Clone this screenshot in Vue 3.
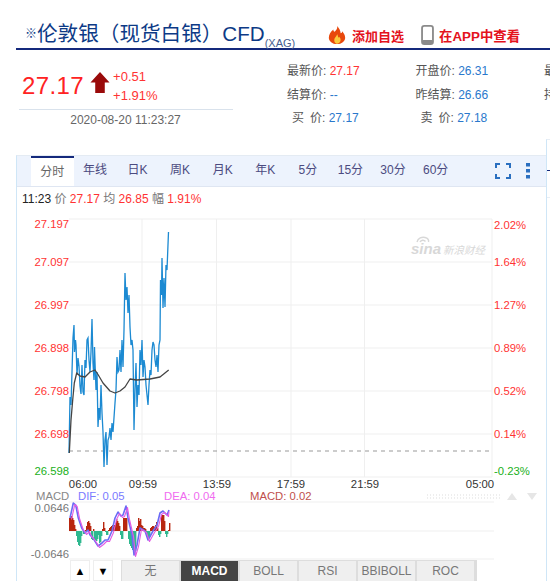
<script setup>
const stats = [
  [
    { label: '最新价:', value: '27.17', up: true },
    { label: '结算价:', value: '--' },
    { label: '买', tail: '价:', value: '27.17', gap: true },
  ],
  [
    { label: '开盘价:', value: '26.31' },
    { label: '昨结算:', value: '26.66' },
    { label: '卖', tail: '价:', value: '27.18', gap: true },
  ],
  [
    { label: '最高价:', value: '27.20' },
    { label: '持仓量:', value: '--' },
    { label: '', value: '' },
  ],
]

const tabs = ['分时', '年线', '日K', '周K', '月K', '年K', '5分', '15分', '30分', '60分']
const indicators = ['无', 'MACD', 'BOLL', 'RSI', 'BBIBOLL', 'ROC']

const leftLabels = [
  { y: 228, text: '27.197', color: '#f33' },
  { y: 266, text: '27.097', color: '#f33' },
  { y: 309, text: '26.997', color: '#f33' },
  { y: 352, text: '26.898', color: '#f33' },
  { y: 395, text: '26.798', color: '#f33' },
  { y: 438, text: '26.698', color: '#f33' },
  { y: 475, text: '26.598', color: '#1ab01a' },
]
const rightLabels = [
  { y: 229, text: '2.02%', color: '#f33' },
  { y: 266, text: '1.64%', color: '#f33' },
  { y: 309, text: '1.27%', color: '#f33' },
  { y: 352, text: '0.89%', color: '#f33' },
  { y: 395, text: '0.52%', color: '#f33' },
  { y: 438, text: '0.14%', color: '#f33' },
  { y: 475, text: '-0.23%', color: '#1ab01a' },
]
const hLines = [219, 262, 305, 348, 391, 434, 477]
const vLines = [142, 216.5, 291, 364.5, 492]
const times = [
  { x: 83, text: '06:00' },
  { x: 143, text: '09:59' },
  { x: 217, text: '13:59' },
  { x: 291, text: '17:59' },
  { x: 365, text: '21:59' },
  { x: 480, text: '05:00' },
]

const price = [
  69, 453, 70, 397, 71, 405, 72, 372, 73, 338, 74, 325, 74.5, 352, 75.5, 340, 76, 345, 77, 375,
  78, 358, 79, 366, 80, 386, 81, 394, 82, 365, 83, 392, 84, 395, 85, 360, 86, 368, 87, 340,
  88, 338, 89, 360, 90, 372, 91, 352, 92, 319, 93, 363, 94, 380, 94.5, 347, 95, 362, 96, 390,
  97, 372, 98, 427, 99, 408, 100, 420, 101, 385, 102, 413, 103, 432, 104, 467, 105, 440, 106, 432,
  107, 465, 108, 440, 109, 437, 110, 428, 111, 440, 112, 423, 113, 432, 115, 403, 116, 390, 117, 357,
  118, 372, 119, 370, 120, 350, 121, 372, 122, 340, 123, 367, 124, 330, 125, 273, 126, 300, 127, 287,
  128, 313, 129, 295, 130, 327, 131, 345, 132, 340, 133, 350, 134, 430, 135, 390, 136, 363, 137, 407,
  138, 385, 139, 395, 140, 350, 141, 365, 142, 340, 143, 377, 144, 360, 145, 367, 146, 385, 148, 405,
  149, 385, 150, 370, 151, 375, 152, 350, 153, 342, 154, 345, 155, 360, 156, 367, 157, 355, 158, 372,
  159, 345, 160, 340, 160.5, 280, 161.5, 295, 162, 258, 163, 308, 164, 278, 165, 307, 166, 265, 167, 270,
  168.5, 232,
]
const pricePoints = price.join(' ')

const avgPoints = '69.3,453 71,420 72.7,400 74.3,383 76.7,373 80,376 85,377 90,372 95,370 98.3,375 103,383 110,391 115,393 120,391 125,387 130,379 136.7,380 150,379 160,377 168.7,370'

// macd histogram, one value per x from 69 on
const macd = [
  13, 15, 15, 13, 11, 6, 2, -5, -11, -14, -15, -12, -5, 0, -3, -3, 1, 5, 9, 10,
  8, 5, -8, -9, 2, -8, -9, -10, -8, -4, -12, -11, -5, 2, 9, 3, -1, -4, -4, 1,
  3, 4, 5, 6, 4, 6, 8, 12, 10, 8, 5, -4, -8, -8, 13, 13, 13, 13, 0, -8, -13, -15,
  -17, -19, -21, -23, -20, 3, 5, 13, 10, 12, 6, 5, 3, 3, 2, -3, -7, -7, -6, 3,
  4, 5, 5, 4, 6, 9, 3, -4, -6, -3, 16, 16, 16, 10, -3, -6, -3, 1, 8,
]
const macdBars = macd.map((v, i) => ({
  x: 69 + i,
  y: v > 0 ? 531 - v : 531,
  h: Math.abs(v),
  color: v > 0 ? '#b8260f' : '#2fb88f',
}))

const dif = [
  [70, 518], [73.3, 503], [75.7, 505], [78.3, 518], [81.7, 528], [85, 533], [88, 530], [90, 535],
  [93, 538], [98, 546], [102, 543], [105, 540], [108, 540], [112, 531], [115, 518], [118, 512],
  [121, 516], [123, 515], [126, 506], [128, 518], [132, 535], [134, 555], [137, 545], [140, 528],
  [145, 531], [148, 540], [153, 531], [157, 525], [160, 513], [163, 511], [167, 515], [169, 510],
]
const difPoints = dif.map(([x, y]) => `${x},${y}`).join(' ')
const deaPoints = dif.map(([x, y]) => `${Math.min(x + 1.5, 169)},${y + 1.5}`).join(' ')
</script>

<template>
  <div class="page">
    <header class="head">
      <h1 class="title">
        <span class="mark">※</span>伦敦银（现货白银）CFD<sub class="code">(XAG)</sub>
      </h1>
      <a class="head-link fav">
        <svg width="20" height="20" viewBox="0 0 22 22">
          <path d="M11 1c1 3-1 4-2 6-1 1-2 0-2-2-3 2-5 6-5 9 0 4 4 7 9 7s9-3 9-7c0-3-2-5-3-7-.4 1.500-1 2-2 2 0-3-2-6-4-8z" fill="#e8480c" />
          <path d="M11 10c.5 2-3 3.500-3 7 0 2 1.500 3.500 3 3.500s4-1.500 4-4c0-2-1-2.500-1.500-3.500-.5 1-1 1-1.200.6-.2-1.200-.6-2.800-1.300-3.600z" fill="#fbc93c" />
        </svg>
        添加自选
      </a>
      <a class="head-link app">
        <svg width="13" height="20" viewBox="0 0 14 22">
          <rect x="1" y="1" width="12" height="20" rx="2.500" fill="#fff" stroke="#8a8a8a" stroke-width="2" />
          <rect x="1" y="16.500" width="12" height="4.500" rx="1.500" fill="#8a8a8a" />
        </svg>
        在APP中查看
      </a>
    </header>

    <section class="quote">
      <div class="now">
        <div class="now-top">
          <span class="big">27.17</span>
          <svg class="up" width="20" height="21" viewBox="0 0 20 22">
            <path d="M10 0 20 11H15V22H5V11H0Z" fill="#9a0a0a" />
          </svg>
          <div class="change">
            <span>+0.51</span>
            <span>+1.91%</span>
          </div>
        </div>
        <div class="stamp">2020-08-20 11:23:27</div>
      </div>
      <div class="stats">
        <div v-for="(col, c) in stats" :key="c" class="col">
          <div v-for="(item, r) in col" :key="r" class="stat" :class="{ gap: item.gap }">
            <span class="lbl">{{ item.label }}</span>
            <span v-if="item.tail" class="lbl tail">{{ item.tail }}</span>
            <span class="val" :class="{ red: item.up }">&nbsp;{{ item.value }}</span>
          </div>
        </div>
      </div>
    </section>

    <section class="panel">
      <nav class="tabs">
        <span v-for="(t, i) in tabs" :key="t" class="tab" :class="{ on: i === 0 }">{{ t }}</span>
        <span class="tools">
          <svg width="16" height="16" viewBox="0 0 16 16" fill="none" stroke="#2a6fc0" stroke-width="2">
            <path d="M1 5V1H5M11 1H15V5M15 11V15H11M5 15H1V11" />
          </svg>
          <svg class="dots" width="4" height="16" viewBox="0 0 4 16" fill="#2a6fc0">
            <rect width="4" height="3.500" />
            <rect y="6" width="4" height="3.500" />
            <rect y="12" width="4" height="3.500" />
          </svg>
        </span>
      </nav>

      <div class="readout">
        <b>11:23</b> <i>价</i> <em>27.17</em> <i>均</i> <em>26.85</em> <i>幅</i> <em>1.91%</em>
      </div>

      <div class="chart">
        <svg class="plot" width="529" height="353" viewBox="17 207 529 353">
          <line v-for="y in hLines" :key="y" x1="69" x2="492" :y1="y" :y2="y" stroke="#efefef" stroke-width="1" />
          <line v-for="x in vLines" :key="x" :x1="x" :x2="x" y1="219" y2="477" stroke="#efefef" stroke-width="1" />
          <line x1="69" x2="492" y1="451" y2="451" stroke="#999" stroke-dasharray="4 4" />

          <polyline :points="pricePoints" fill="none" stroke="#1c8ad2" stroke-width="1.300" />
          <polyline :points="avgPoints" fill="none" stroke="#444" stroke-width="1.300" stroke-linejoin="round" />

          <text v-for="l in leftLabels" :key="l.text" class="num" x="69" :y="l.y" text-anchor="end" :fill="l.color">{{ l.text }}</text>
          <text v-for="l in rightLabels" :key="l.text" class="num" x="494" :y="l.y" :fill="l.color">{{ l.text }}</text>
          <text v-for="t in times" :key="t.text" class="num" :x="t.x" y="488" text-anchor="middle" fill="#333">{{ t.text }}</text>

          <text class="num" x="36" y="500" fill="#888">MACD</text>
          <text class="num" x="78" y="500" fill="#7a7aff">DIF: 0.05</text>
          <text class="num" x="164" y="500" fill="#f06bf0">DEA: 0.04</text>
          <text class="num" x="250" y="500" fill="#c0504d">MACD: 0.02</text>

          <line x1="69" x2="494" y1="502" y2="502" stroke="#efefef" />
          <line x1="69" x2="494" y1="531" y2="531" stroke="#efefef" />
          <line x1="69" x2="494" y1="559" y2="559" stroke="#efefef" />

          <line x1="427" x2="500" y1="495" y2="495" stroke="#ddd" stroke-width="1" stroke-dasharray="1 2" />
          <line x1="427" x2="500" y1="498" y2="498" stroke="#ddd" stroke-width="1" stroke-dasharray="1 2" />
          <path d="M507 500 512 493 517 500Z" fill="#e6e6e6" />
          <path d="M527 493 537 493 532 500Z" fill="#e6e6e6" />

          <rect v-for="(b, i) in macdBars" :key="i" :x="b.x" :y="b.y" width="1.400" :height="b.h" :fill="b.color" />
          <polyline :points="difPoints" fill="none" stroke="#6a6af5" stroke-width="1.600" stroke-linejoin="round" />
          <polyline :points="deaPoints" fill="none" stroke="#e35be3" stroke-width="1.100" stroke-linejoin="round" />

          <text class="num" x="69" y="512" text-anchor="end" fill="#777">0.0646</text>
          <text class="num" x="69" y="558" text-anchor="end" fill="#777">-0.0646</text>
        </svg>

        <div class="wm">
          <svg class="wm-eye" width="14" height="7" viewBox="0 0 14 7" fill="none" stroke="#d8d8d8" stroke-width="1.400">
            <path d="M1 6C2 2 6 .8 9 1.500 12 2.200 13 4 12.500 6M4 6C5 4 8 3.500 9.500 5.500" />
          </svg>
          <span class="wm-sina">sina</span>新浪财经
        </div>
      </div>

      <div class="bottom">
        <span class="arrows">
          <span class="arrow">▲</span>
          <span class="arrow">▼</span>
        </span>
        <span class="inds">
          <span v-for="(n, i) in indicators" :key="n" class="ind" :class="{ on: i === 1 }">{{ n }}</span>
        </span>
      </div>
    </section>

    <div class="edge"><span class="edge-dash"></span><span class="edge-line"></span></div>
  </div>
</template>

<style scoped>
.page {
  position: relative;
  width: 550px;
  height: 581px;
  overflow: hidden;
  background: #fff;
  font-family: "Liberation Sans", "Noto Sans CJK SC", sans-serif;
  color: #333;
}
.head {
  display: flex;
  align-items: center;
  height: 33px;
  margin-left: 16px;
  padding-top: 15px;
  border-bottom: 2px solid #14297c;
}
.title {
  margin: 0 0 0 9px;
  width: 302px;
  flex: none;
  font-size: 20.600px;
  font-weight: 400;
  color: #0d3a86;
  white-space: nowrap;
}
.mark {
  font-size: 12px;
  vertical-align: 3px;
}
.code {
  font-size: 11px;
  color: #47608f;
  vertical-align: -6px;
  line-height: 0;
}
.head-link {
  display: flex;
  align-items: center;
  gap: 5px;
  margin-top: 7px;
  font-size: 13px;
  font-weight: 700;
  color: #e4121c;
  white-space: nowrap;
}
.app {
  margin-left: 17px;
  font-size: 13.400px;
}
.quote {
  display: flex;
  height: 105px;
}
.now {
  width: 214px;
  margin-left: 19px;
  flex: none;
}
.now-top {
  display: flex;
  height: 60px;
  padding-top: 17px;
  box-sizing: border-box;
  border-bottom: 1px solid #d9e2ec;
}
.big {
  margin-left: 3px;
  font-size: 24px;
  line-height: 38px;
  letter-spacing: 0.4px;
  color: #f22;
}
.up {
  margin: 5px 0 0 6px;
}
.change {
  display: flex;
  flex-direction: column;
  margin-left: 3px;
  font-size: 13px;
  line-height: 19px;
  color: #f33;
}
.stamp {
  margin-top: 3px;
  text-align: center;
  font-size: 12px;
  color: #666;
  padding-right: 1px;
}
.stats {
  display: flex;
  flex: none;
  margin: 10px 0 0 54px;
}
.col {
  width: 128.500px;
  flex: none;
}
.stat {
  display: flex;
  height: 23.500px;
  line-height: 23.500px;
  font-size: 12px;
  white-space: nowrap;
}
.stat.gap {
  padding-left: 5px;
}
.tail {
  margin-left: 6px;
}
.lbl {
  color: #555;
}
.val {
  color: #2a78cc;
}
.val.red {
  color: #f33;
}
.panel {
  width: 530px;
  height: 426px;
  margin-left: 16px;
  box-sizing: border-box;
  border-left: 1px solid #cfe6f7;
  border-top: 1px solid #e4ebf3;
  overflow: hidden;
}
.tabs {
  display: flex;
  height: 30px;
  padding-left: 14px;
  background: #edf3fd;
  border-bottom: 1px solid #dfe6f2;
  font-size: 12px;
}
.tab {
  width: 42.600px;
  flex: none;
  text-align: center;
  line-height: 29px;
  color: #4b4a80;
}
.tab.on {
  height: 30px;
  box-sizing: border-box;
  background: #fff;
  border-top: 2px solid #14297c;
  line-height: 28px;
  color: #666;
}
.tools {
  display: flex;
  align-items: center;
  gap: 15px;
  margin-left: 38px;
}
.readout {
  height: 15px;
  padding: 4px 0 0 5px;
  font-size: 12px;
  line-height: 16px;
  white-space: nowrap;
}
.readout b {
  font-weight: 400;
  color: #222;
}
.readout i {
  font-style: normal;
  color: #777;
}
.readout em {
  font-style: normal;
  color: #f33;
}
.chart {
  position: relative;
  height: 353px;
  margin-top: 1px;
}
.plot {
  display: block;
}
.num {
  font-size: 11.300px;
}
.wm {
  position: absolute;
  left: 394px;
  top: 33px;
  font-size: 10.500px;
  font-style: italic;
  color: #d8d8d8;
  white-space: nowrap;
}
.wm-eye {
  position: absolute;
  left: 5px;
  top: -4px;
}
.wm-sina {
  font-size: 15px;
  font-weight: 700;
  margin-right: 2px;
}
.bottom {
  display: flex;
  height: 21px;
}
.arrows {
  display: flex;
  gap: 3px;
  margin-left: 53px;
}
.arrow {
  width: 20px;
  height: 21px;
  box-sizing: border-box;
  border: 1px solid #eee;
  text-align: center;
  font-size: 11px;
  line-height: 20px;
  color: #000;
}
.inds {
  display: flex;
  margin-left: 8px;
  border: 1px solid #ddd;
  border-bottom: 0;
}
.ind {
  width: 59px;
  flex: none;
  box-sizing: border-box;
  border-right: 2px solid #ddd;
  background: #efefef;
  text-align: center;
  font-size: 12px;
  line-height: 20px;
  color: #777;
}
.ind.on {
  background: #444;
  color: #fff;
  font-weight: 700;
}
.edge {
  position: absolute;
  left: 546px;
  top: 139px;
  bottom: 0;
  width: 3px;
  border-left: 1px solid #cfe6f7;
  border-top: 1px solid #e8eef5;
}
.edge-dash {
  position: absolute;
  left: 0;
  top: 30px;
  width: 3px;
  height: 1px;
  background: #14297c;
}
.edge-line {
  position: absolute;
  left: 0;
  top: 57px;
  width: 3px;
  height: 1px;
  background: #e8eef5;
}
</style>
